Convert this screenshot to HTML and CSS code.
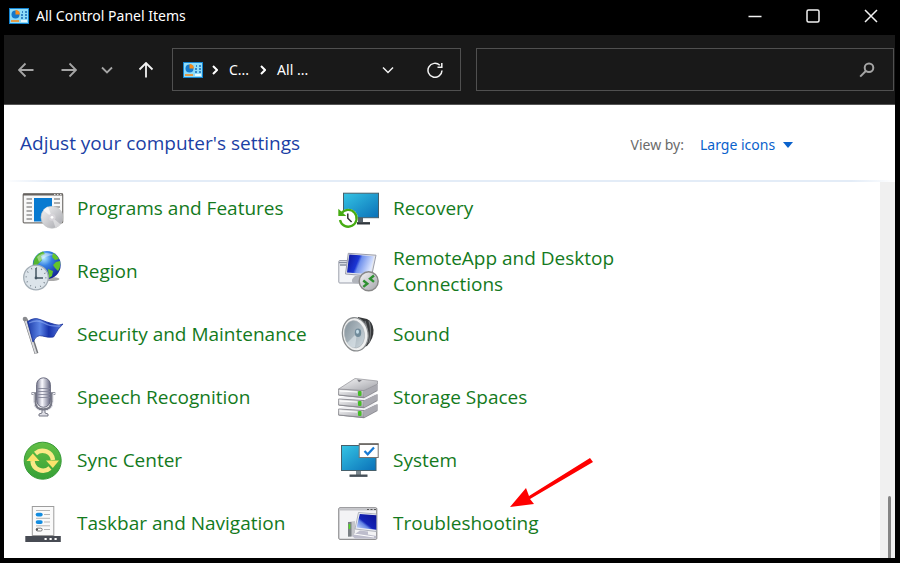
FILE: index.html
```html
<!DOCTYPE html>
<html lang="en">
<head>
  <meta charset="UTF-8" />
  <meta name="viewport" content="width=device-width, initial-scale=1.0" />
  <title>All Control Panel Items</title>
  <link rel="stylesheet" href="styles.css">
</head>
<body>
  <!-- shared gradients and the small control panel icon -->
  <svg class="defs" aria-hidden="true">
    <defs>
      <linearGradient id="screen" x1="0" y1="0" x2="1" y2="1"><stop offset="0" stop-color="#35c4e4"/><stop offset="1" stop-color="#0a70b8"/></linearGradient>
      <linearGradient id="silver" x1="0" y1="0" x2="1" y2="1"><stop offset="0" stop-color="#f6f6f7"/><stop offset="1" stop-color="#a3a4aa"/></linearGradient>
      <linearGradient id="tube" x1="0" y1="0" x2="1" y2="0"><stop offset="0" stop-color="#77798f"/><stop offset=".4" stop-color="#fafaff"/><stop offset="1" stop-color="#62647e"/></linearGradient>
      <linearGradient id="royal" x1="0" y1="0" x2="1" y2=".3"><stop offset="0" stop-color="#0d1394"/><stop offset=".45" stop-color="#1b36d4"/><stop offset=".55" stop-color="#6f90ec"/><stop offset="1" stop-color="#dde7ff"/></linearGradient>
      <linearGradient id="sheen" x1="0" y1="1" x2="1" y2="0"><stop offset="0" stop-color="#dbe6ff"/><stop offset=".35" stop-color="#6485e4"/><stop offset=".45" stop-color="#1424b8"/><stop offset="1" stop-color="#0d1394"/></linearGradient>
      <linearGradient id="cloth" x1="0" y1="0" x2="1" y2="0"><stop offset="0" stop-color="#1c3ba8"/><stop offset=".35" stop-color="#5c85e6"/><stop offset=".6" stop-color="#1733ac"/><stop offset="1" stop-color="#5d7fe2"/></linearGradient>
      <radialGradient id="globe" cx=".4" cy=".25" r=".8"><stop offset="0" stop-color="#b5ecff"/><stop offset=".35" stop-color="#3681e4"/><stop offset="1" stop-color="#101b8c"/></radialGradient>
      <linearGradient id="green" x1="0" y1="0" x2="0" y2="1"><stop offset="0" stop-color="#64bf45"/><stop offset="1" stop-color="#35a036"/></linearGradient>
      <linearGradient id="cone" x1="0" y1="0" x2="1" y2="1"><stop offset="0" stop-color="#7f8d96"/><stop offset="1" stop-color="#d3dde3"/></linearGradient>
      <symbol id="panel" viewBox="0 0 20 16">
        <rect width="20" height="16" fill="#1484d1"/>
        <rect x="1" y="1" width="18" height="14" fill="#8edcf9"/>
        <circle cx="6.500" cy="6.500" r="4" fill="#1378cb"/>
        <path d="M6.500 6.500V2a4.500 4.500 0 0 1 4.500 4.500z" fill="#f58b1c"/>
        <path d="M12 7h2M12 10h2M16 4h2M16 7h2M16 10h2M13 4h1" stroke="#1768b5" stroke-width="1.600"/>
        <path d="M2 13h8" stroke="#f58b1c" stroke-width="1.600"/>
        <path d="M12 13h6" stroke="#fff" stroke-width="1.600"/>
      </symbol>
    </defs>
  </svg>

  <div class="window">
    <header class="titlebar">
      <svg class="panel-icon" aria-hidden="true"><use href="#panel"/></svg>
      <h1>All Control Panel Items</h1>
      <div class="window-buttons">
        <button type="button" aria-label="Minimize"><svg viewBox="0 0 14 14"><path d="M.5 7.500h13"/></svg></button>
        <button type="button" aria-label="Maximize"><svg viewBox="0 0 14 14"><rect x="1" y="1" width="12" height="12" rx="1.500"/></svg></button>
        <button type="button" aria-label="Close"><svg viewBox="0 0 14 14"><path d="M1 1l12 12M13 1L1 13"/></svg></button>
      </div>
    </header>

    <nav class="toolbar">
      <div class="nav-buttons">
        <button type="button" class="dim" aria-label="Back"><svg viewBox="0 0 16 16"><path d="M15.500 8H1M7.500 1.500L1 8l6.500 6.500"/></svg></button>
        <button type="button" class="dim" aria-label="Forward"><svg viewBox="0 0 16 16"><path d="M.5 8H15M8.500 1.500L15 8l-6.500 6.500"/></svg></button>
        <button type="button" class="dim small" aria-label="Recent locations"><svg viewBox="0 0 16 16"><path d="M3 5.500l5 5 5-5"/></svg></button>
        <button type="button" aria-label="Up"><svg viewBox="0 0 16 16"><path d="M8 15.500V1M1.500 7.500L8 1l6.500 6.500"/></svg></button>
      </div>
      <div class="address">
        <svg class="panel-icon" aria-hidden="true"><use href="#panel"/></svg>
        <svg class="sep" viewBox="0 0 6 10"><path d="M1 1l4 4-4 4"/></svg>
        <a href="#">C...</a>
        <svg class="sep" viewBox="0 0 6 10"><path d="M1 1l4 4-4 4"/></svg>
        <a href="#">All ...</a>
        <button type="button" class="history" aria-label="Previous locations"><svg viewBox="0 0 16 16"><path d="M3 5.500l5 5 5-5"/></svg></button>
        <button type="button" aria-label="Refresh"><svg viewBox="0 0 16 16"><path d="M15 8.500A7 7 0 1 1 12.800 3.200M14.800 1v4.300h-4.300"/></svg></button>
      </div>
      <div class="search">
        <input type="search" aria-label="Search Control Panel">
        <svg viewBox="0 0 16 16" aria-hidden="true"><circle cx="10" cy="5.800" r="4.300"/><path d="M6.800 9L1.200 14.600"/></svg>
      </div>
    </nav>

    <div class="heading">
      <h2>Adjust your computer's settings</h2>
      <label for="view">View by:</label>
      <div class="view-select">
        <select id="view">
          <option>Large icons</option>
        </select>
        <svg viewBox="0 0 10 6" aria-hidden="true"><path d="M0 0h10L5 6z"/></svg>
      </div>
    </div>

    <main class="content">
      <ul class="items">
        <li><a href="#">
          <svg viewBox="0 0 42 42">
            <rect x="1.200" y="5.800" width="39.500" height="29" rx="1" fill="#f8f8f8" stroke="#777471" stroke-width="1.200"/>
            <path d="M1 6.500h40" stroke="#66625f" stroke-width="2"/>
            <path d="M32 6.500h1.500M35 6.500h1.500M38 6.500h1.500" stroke="#ddd"/>
            <path d="M4.500 11h5.500M4.500 15h5.500M4.500 19h5.500M4.500 23h5.500M4.500 27h5.500M4.500 31h5.500M32 11h6M32 15h6M32 19h6" stroke="#929292" stroke-width="1.300"/>
            <rect x="12" y="10" width="18" height="23.500" fill="#087ad1"/>
            <circle cx="30" cy="29.300" r="11" fill="url(#silver)" stroke="#c2c4c4" stroke-width=".6"/>
            <path d="M30 29.300L21 22a11 11 0 0 1 5-3.500z" fill="#fff" opacity=".65"/>
            <path d="M30 29.300l8.500 7a11 11 0 0 1-5 3.500z" fill="#fff" opacity=".45"/>
            <circle cx="30" cy="29.300" r="3.500" fill="#d7d5da"/><circle cx="30" cy="29.300" r="1.400" fill="#fff"/>
          </svg>
          <span>Programs and Features</span></a></li>
        <li><a href="#">
          <svg viewBox="0 0 42 42">
            <path d="M20 29h5v5h-5z" fill="#56616a"/>
            <rect x="5.500" y="5.200" width="35" height="24.500" fill="url(#screen)" stroke="#46606c"/>
            <path d="M19 35.300h13" stroke="#30373d" stroke-width="2.400"/>
            <circle cx="10.300" cy="30.300" r="9.500" fill="#fff"/>
            <path d="M3.200 25.700A8.400 8.400 0 1 1 2 32" fill="none" stroke="#46ac12" stroke-width="2.300"/>
            <path d="M.3 20.800V28h8z" fill="#46ac12"/>
            <path d="M9.800 25.500v4.700l3.800 3.800" fill="none" stroke="#333" stroke-width="1.500"/>
          </svg>
          <span>Recovery</span></a></li>
        <li><a href="#">
          <svg viewBox="0 0 42 42">
            <ellipse cx="28" cy="28" rx="9.500" ry="2" fill="#aaa"/>
            <circle cx="24.700" cy="14" r="14" fill="url(#globe)"/>
            <path d="M12 9q3-7 9-8.500l2 2.500-4 2 1 4-5 5-4 1z" fill="#54b62f"/>
            <path d="M31 2q4 2 6 6l-4 1-3-3zM34 11l4-1q1 6-2 10l-3-3-2-3zM26 18l5 2-1 5-3 2z" fill="#63c42b"/>
            <path d="M15 6q7-7 17-2-8 0-15 7z" fill="#fff" opacity=".4"/>
            <circle cx="14" cy="26.500" r="12.300" fill="#dce4ea" stroke="#a4aeb6" stroke-width="1.300"/>
            <circle cx="14" cy="26.500" r="9.800" fill="none" stroke="#6e7b85" stroke-width="1.500" stroke-dasharray=".8 4.330"/>
            <path d="M14 17v10h7" fill="none" stroke="#435562" stroke-width="1.500"/>
            <circle cx="14" cy="27" r="1.400" fill="#435562"/>
          </svg>
          <span>Region</span></a></li>
        <li><a href="#">
          <svg viewBox="0 0 42 42">
            <rect x=".8" y="9.500" width="24" height="22.500" rx="1" fill="#f2f4f7" stroke="#9b9faa"/>
            <path d="M1 11.500h10M2 14h8" stroke="#868e9f" stroke-width="1.400"/>
            <path d="M17 25l10-1-2 9-10-1q-3-3 2-7z" fill="#b1b4bb"/>
            <path d="M10.300 2.300L38 4.200l-4.500 21L7.500 23z" fill="#e5e6ea" stroke="#9a9dab"/>
            <path d="M11.300 3.500l24.700 1.800-3.700 18L9 21.500z" fill="url(#royal)"/>
            <circle cx="30.700" cy="30.300" r="9.500" fill="url(#silver)" stroke="#888" stroke-width="1.400"/>
            <path d="M25.300 29.500l4 3.200-4 3.200M36 24.500l-4 3.200 4 3.200" fill="none" stroke="#2f9132" stroke-width="2.400"/>
          </svg>
          <span>RemoteApp and Desktop Connections</span></a></li>
        <li><a href="#">
          <svg viewBox="0 0 42 42">
            <path d="M3.500 5l11 34.500" stroke="#74767a" stroke-width="4"/>
            <path d="M3 5l11 34.500" stroke="#d9dadc" stroke-width="2"/>
            <circle cx="3" cy="5" r="2.300" fill="#898a8e"/>
            <path d="M5.500 7.500Q12 3 18 5.500t15 5q4 1.500 8-.5-5 4-9.500 13-5 1-11-1T11 28z" fill="url(#cloth)" stroke="#16309b" stroke-width=".8"/>
            <path d="M7 9q8-4 15 0t16 3" fill="none" stroke="#91aff5" stroke-width="1.300" opacity=".6"/>
          </svg>
          <span>Security and Maintenance</span></a></li>
        <li><a href="#">
          <svg viewBox="0 0 42 42">
            <path d="M20 3l9 2q6 3 6.500 11T29 32l-10 3z" fill="#36383a"/>
            <path d="M27 7q4 9 0 24M31 7q3 9 0 22" fill="none" stroke="#737679" stroke-width="1.200"/>
            <ellipse cx="17.300" cy="20.300" rx="12.800" ry="16.700" transform="rotate(-8 17.300 20.300)" fill="#eff0f0" stroke="#8b8e90" stroke-width="1.300"/>
            <ellipse cx="16.500" cy="20.300" rx="10" ry="13.800" transform="rotate(-8 16.500 20.300)" fill="url(#cone)" stroke="#aab0b4" stroke-width=".6"/>
            <path d="M19 19L9 29q3 6 8 4z" fill="#dfe8ed" opacity=".6"/>
            <ellipse cx="20" cy="18.800" rx="3.200" ry="4.200" fill="#718b9a"/><ellipse cx="19.500" cy="17.800" rx="1.500" ry="2" fill="#c4dce8"/>
          </svg>
          <span>Sound</span></a></li>
        <li><a href="#">
          <svg viewBox="0 0 42 42">
            <path d="M9.500 16.500h3.500v8q0 8 8.400 8t8.400-8v-8h3.500" fill="none" stroke="#777986" stroke-width="2.600"/>
            <path d="M10 16.500h2v8q0 9.500 9.400 9.500T31 24.500v-8h2" fill="none" stroke="#ececf2" stroke-width="1"/>
            <rect x="14.600" y=".8" width="13.800" height="29.500" rx="6.900" fill="url(#tube)" stroke="#6b6d80"/>
            <path d="M15 11.500h13M15 14.500h13M15 17.500h13M15 20.500h13" stroke="#85879a" stroke-width=".9"/>
            <path d="M20 33h3v3l3 1v2h-9v-2l3-1z" fill="#dedee5" stroke="#777986"/>
          </svg>
          <span>Speech Recognition</span></a></li>
        <li><a href="#">
          <svg viewBox="0 0 42 42">
            <g id="drive"><path d="M.6 34.500L14 26.500l25.500 1v6.500L26 41.300.6 38.500z" fill="#8b8b91"/><path d="M.6 32L14 24.500l25.500 2.500L26 33.500z" fill="#f1f1f4"/><path d="M.6 32L26 33.500v7L.6 38z" fill="url(#silver)" stroke="#85858b" stroke-width=".8"/><path d="M26 33.500l13.500-6.500v6L26 40.500z" fill="#a9a9b0"/><path d="M2 34l17 1" stroke="#fff"/><rect x="20" y="34" width="3.500" height="5" rx="1" fill="#44bd24"/></g>
            <use href="#drive" y="-10"/>
            <use href="#drive" y="-20"/>
            <path d="M.6 12L17 1.500 39.500 4v3L26 13.500z" fill="url(#silver)" stroke="#909096" stroke-width=".7"/>
            <path d="M19 2.500l5 .7-3 2z" fill="#77777e"/>
          </svg>
          <span>Storage Spaces</span></a></li>
        <li><a href="#">
          <svg viewBox="0 0 42 42">
            <circle cx="20.700" cy="20.700" r="18.500" fill="url(#green)" stroke="#369a37"/>
            <path d="M13.500 13.500A10.500 10.500 0 0 1 31 20" fill="none" stroke="#fae987" stroke-width="4.500"/>
            <path d="M24 20.500h13L30.800 28z" fill="#fbe36c"/>
            <path d="M28 28A10.500 10.500 0 0 1 10.500 21" fill="none" stroke="#fae987" stroke-width="4.500"/>
            <path d="M4.500 21h13L10.800 13.500z" fill="#fbe36c"/>
          </svg>
          <span>Sync Center</span></a></li>
        <li><a href="#">
          <svg viewBox="0 0 42 42">
            <path d="M18 30h5v5h-5z" fill="#7c8990"/>
            <rect x="3.500" y="5.500" width="34.500" height="25" fill="url(#screen)" stroke="#46606c"/>
            <path d="M11.500 35.700h18" stroke="#465058" stroke-width="2.400"/>
            <rect x="21.200" y="3.800" width="19" height="13.700" fill="#fff" stroke="#777471"/>
            <path d="M21 4.200h19.500" stroke="#6a6663" stroke-width="1.500"/>
            <path d="M26.500 11l3.200 3.300L36 7.500" fill="none" stroke="#1679d4" stroke-width="2.200"/>
          </svg>
          <span>System</span></a></li>
        <li><a href="#">
          <svg viewBox="0 0 42 42">
            <rect x="10.300" y="3.500" width="21.500" height="29" fill="#fafafa" stroke="#9d9d9d"/>
            <path d="M14 7.500h14M22 11.500h6M14 15.300h14M22 19h6M14 22.800h14M22 26.500h6" stroke="#b5b5b5"/>
            <rect x="13.700" y="9.700" width="7" height="3.800" rx="1.900" fill="#128ce0"/><rect x="13.700" y="17.200" width="7" height="3.800" rx="1.900" fill="#128ce0"/>
            <rect x="14.200" y="25.200" width="6" height="2.800" rx="1.400" fill="#fff" stroke="#777"/>
            <path d="M14 26.600h2" stroke="#555" stroke-width="2"/>
            <rect x="3.300" y="33" width="35.500" height="6" fill="#474b53"/>
            <path d="M22.500 36h2.200M27.500 36h2.200M32.500 36h2.200" stroke="#fff" stroke-width="2"/>
          </svg>
          <span>Taskbar and Navigation</span></a></li>
        <li class="pointed"><a href="#">
          <svg viewBox="0 0 42 42">
            <rect x=".8" y="4.800" width="38" height="31.500" rx="1" fill="#f3f3f5" stroke="#77777a"/>
            <path d="M1.500 6.500h36.500" stroke="#c3c4c8" stroke-width="2"/><path d="M29 6.500h2M32.500 6.500h2M36 6.500h2" stroke="#555"/>
            <path d="M10 19l7-1v15l-7 1z" fill="#c4c5ca"/><path d="M10 19h3.500v14.500H10z" fill="#7b8084"/><path d="M11.500 21v5" stroke="#55d627" stroke-width="1.600"/>
            <path d="M20.500 9.500l17.800 1.500v17.500L17 26z" fill="#eef0f5" stroke="#a1a4ae" stroke-width=".8"/>
            <path d="M21.800 11l16.500 1.300v14.500L18.500 24.500z" fill="url(#sheen)"/>
            <path d="M22 27.500l8 1v3l8.300 1.500v2.500H17l-3-2.500z" fill="#bdbdcc"/><path d="M16 31l20 3" stroke="#fff" stroke-width="1.200"/>
          </svg>
          <span>Troubleshooting</span></a>
          <svg class="arrow" viewBox="0 0 84 52" aria-hidden="true"><path d="M80 1l3 4L20 42l4 5L0 50 16 31l3 8z"/></svg>
        </li>
      </ul>
      <div class="scrollbar"><div class="thumb"></div></div>
    </main>
  </div>
</body>
</html>
```
FILE: styles.css
```css
* {
  box-sizing: border-box;
}
body {
  margin: 0;
  background: #000;
  font-family: "Noto Sans", "Open Sans", sans-serif;
}
.defs {
  position: absolute;
  width: 0;
  height: 0;
}
h1, h2, ul {
  margin: 0;
  padding: 0;
  font-weight: 400;
}
a {
  color: inherit;
  text-decoration: none;
}
button {
  display: flex;
  align-items: center;
  justify-content: center;
  padding: 0;
  border: none;
  background: none;
  color: #f2f2f2;
  cursor: pointer;
}
button svg, .sep, .search svg {
  width: 16px;
  height: 16px;
  fill: none;
  stroke: currentColor;
  stroke-width: 1.5;
}
.window {
  display: flex;
  flex-direction: column;
  min-height: 100vh;
  border: solid #000;
  border-width: 0 5px 5px 4px;
  background: #fff;
}

/* title bar */
.titlebar {
  display: flex;
  align-items: center;
  height: 35px;
  padding: 0 0 4px 5px;
  background: #000;
  color: #fff;
}
.panel-icon {
  width: 20px;
  height: 16px;
  flex-shrink: 0;
}
.titlebar h1 {
  margin-left: 7px;
  font-size: 14px;
}
.window-buttons {
  display: flex;
  gap: 10px;
  margin-left: auto;
}
.window-buttons button {
  width: 48px;
  height: 31px;
}
.window-buttons svg {
  width: 14px;
  height: 14px;
}

/* toolbar */
.toolbar {
  display: flex;
  align-items: center;
  height: 70px;
  padding-right: 1px;
  border-bottom: 1px solid #555;
  background: #191919;
  color: #fff;
}
.nav-buttons {
  display: flex;
  width: 168px;
}
.nav-buttons button {
  width: 43px;
  height: 40px;
}
.nav-buttons svg {
  stroke-width: 1.8;
}
.nav-buttons .small {
  width: 34px;
}
.dim {
  color: #a5a5a5;
}
.address, .search {
  display: flex;
  align-items: center;
  height: 43px;
  border: 1px solid #505050;
}
.address {
  flex: 15;
  padding: 0 17px 0 10px;
  font-size: 14px;
}
.address a {
  margin: 0 11px;
}
.address .sep {
  width: 6px;
  height: 10px;
  margin-left: 9px;
  stroke-width: 2;
}
.address .sep ~ .sep {
  margin-left: 0;
}
.address .history {
  margin-left: auto;
  margin-right: 31px;
}
.search {
  flex: 23;
  margin-left: 15px;
  padding-right: 18px;
}
.search input {
  flex: 1;
  min-width: 0;
  height: 40px;
  padding: 0 10px;
  border: none;
  outline: none;
  background: none;
  color: #fff;
  font: inherit;
}
.search svg {
  color: #a5a5a5;
  stroke-width: 2;
}

/* heading */
.heading {
  display: flex;
  align-items: baseline;
  height: 77px;
  padding: 25px 102px 0 16px;
  border-bottom: 2px solid #e3ecf7;
  border-image: linear-gradient(to right, #fff, #e3ecf7 5%, #e3ecf7 95%, #fff) 1;
  border-width: 0 0 2px;
}
.heading h2 {
  margin-right: auto;
  color: #1b3fa5;
  font-family: "Open Sans", "Noto Sans", sans-serif;
  font-size: 19px;
  line-height: 26px;
}
.heading label {
  margin-right: 16px;
  color: #6b6b6b;
  font-size: 14px;
}
.view-select {
  display: flex;
  align-items: center;
  gap: 7px;
}
.view-select select {
  padding: 0;
  border: none;
  appearance: none;
  background: none;
  color: #0a62cc;
  font: 14px "Noto Sans", "Open Sans", sans-serif;
}
.view-select svg {
  width: 10px;
  height: 6px;
  fill: #0a62cc;
}

/* items */
.content {
  display: flex;
  flex: 1;
}
.items {
  display: grid;
  flex: 1;
  grid-template-columns: repeat(auto-fill, 300px);
  grid-auto-rows: 54px;
  gap: 9px 16px;
  padding-left: 18px;
  list-style: none;
}
.items li {
  display: flex;
}
.items a {
  display: flex;
  align-items: center;
  gap: 13px;
  color: #147a1d;
  font-family: "Open Sans", "Noto Sans", sans-serif;
  font-size: 19px;
  line-height: 26px;
}
.items a svg {
  width: 42px;
  height: 42px;
  flex-shrink: 0;
}
.items a span {
  padding-bottom: 2px;
}
.pointed {
  position: relative;
}
.pointed .arrow {
  position: absolute;
  top: -40px;
  left: 172px;
  width: 84px;
  height: 52px;
  fill: #fe0000;
}
.scrollbar {
  display: flex;
  align-items: flex-end;
  justify-content: flex-end;
  width: 15px;
  padding-right: 4px;
  background: #f0f0f0;
}
.thumb {
  width: 3px;
  height: 62px;
  border-radius: 2px 2px 0 0;
  background: #858585;
}
```
